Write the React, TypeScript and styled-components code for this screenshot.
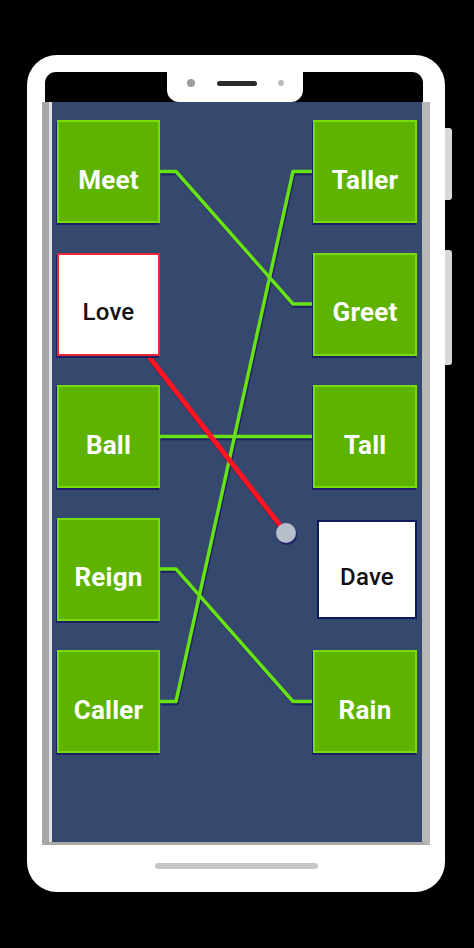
import React from 'react'
import styled, { createGlobalStyle } from 'styled-components'

const GlobalStyle = createGlobalStyle`
  html, body {
    margin: 0;
    padding: 0;
    background: #000;
  }
  body {
    width: 474px;
    height: 948px;
    overflow: hidden;
    font-family: Roboto, "Liberation Sans", sans-serif;
  }
`

const Page = styled.div`
  width: 474px;
  height: 948px;
  background: #000;
  padding: 55px 0 0 27px;
  box-sizing: border-box;
`

const Phone = styled.div`
  position: relative;
  width: 418px;
  height: 837px;
  background: #fff;
  border-radius: 30px;
  padding-top: 17px;
  box-sizing: border-box;
  display: flex;
  flex-direction: column;
`

const SideButton = styled.div<{ $top: number; $height: number }>`
  position: absolute;
  right: -7px;
  top: ${p => p.$top}px;
  width: 7px;
  height: ${p => p.$height}px;
  background: #d9d9d9;
  border-radius: 0 3px 3px 0;
`

const Bezel = styled.div`
  margin-left: 18px;
  width: 378px;
  height: 30px;
  background: #000;
  border-radius: 11px 11px 0 0;
  display: flex;
  justify-content: center;
`

const Notch = styled.div`
  margin-left: 2px;
  width: 136px;
  height: 30px;
  background: #fff;
  border-radius: 0 0 12px 12px;
  display: flex;
  align-items: center;
  justify-content: center;
  padding-bottom: 8px;
  box-sizing: border-box;
`

const Dot = styled.span<{ $size: number; $color: string }>`
  width: ${p => p.$size}px;
  height: ${p => p.$size}px;
  border-radius: 50%;
  background: ${p => p.$color};
`

const Speaker = styled.span`
  width: 40px;
  height: 5px;
  border-radius: 3px;
  background: #2b2b2b;
  margin: 0 21px 0 22px;
`

const ScreenFrame = styled.div`
  margin-left: 15px;
  width: 388px;
  border-left: 7px solid #a8a8a8;
  border-right: 8px solid #b8b8b8;
  border-bottom: 3px solid #a8a8a8;
  box-sizing: border-box;
  padding-left: 3px;
  background: #e4e4e4;
`

const Screen = styled.div`
  position: relative;
  width: 370px;
  height: 740px;
  background: #35486d;
  padding: 18px 5px 0 5px;
  box-sizing: border-box;
  display: flex;
  justify-content: space-between;
`

const Lines = styled.svg`
  position: absolute;
  left: 0;
  top: 0;
  width: 370px;
  height: 740px;
  filter: drop-shadow(1px 2px 0 #1d2062);
`

const Column = styled.div<{ $width: number }>`
  position: relative;
  z-index: 1;
  width: ${p => p.$width}px;
  display: flex;
  flex-direction: column;
  gap: 29.5px;
`

type Kind = 'green' | 'picked' | 'target'

const Card = styled.div<{ $kind: Kind }>`
  height: ${p => (p.$kind === 'target' ? 99 : 103)}px;
  margin: ${p => (p.$kind === 'target' ? '2px 0 2px 4px' : '0')};
  box-sizing: border-box;
  display: flex;
  align-items: center;
  justify-content: center;
  padding-top: 16px;
  font-size: ${p => (p.$kind === 'green' ? 26 : 24)}px;
  font-weight: ${p => (p.$kind === 'green' ? 700 : 500)};
  letter-spacing: 0.2px;
  color: ${p => (p.$kind === 'green' ? '#fff' : '#111')};
  background: ${p => (p.$kind === 'green' ? '#5db300' : '#fff')};
  border: 2px solid
    ${p => (p.$kind === 'green' ? '#78dc0c' : p.$kind === 'picked' ? '#f0243a' : '#0e1a5c')};
  box-shadow: ${p => (p.$kind === 'target' ? 'none' : '-1px 2px 0 #1d2062')};
`

const HomeBar = styled.div`
  margin: 18px auto 0;
  width: 163px;
  height: 6px;
  border-radius: 3px;
  background: #c6c6c6;
`

const left: { word: string; kind: Kind }[] = [
  { word: 'Meet', kind: 'green' },
  { word: 'Love', kind: 'picked' },
  { word: 'Ball', kind: 'green' },
  { word: 'Reign', kind: 'green' },
  { word: 'Caller', kind: 'green' },
]

const right: { word: string; kind: Kind }[] = [
  { word: 'Taller', kind: 'green' },
  { word: 'Greet', kind: 'green' },
  { word: 'Tall', kind: 'green' },
  { word: 'Dave', kind: 'target' },
  { word: 'Rain', kind: 'green' },
]

// left row -> right row
const pairs: [number, number][] = [
  [0, 1],
  [4, 0],
  [2, 2],
  [3, 4],
]

const rowY = (i: number) => 69.5 + i * 132.5

function connector(a: number, b: number) {
  const y1 = rowY(a)
  const y2 = rowY(b)
  if (y1 === y2) return `M108 ${y1} L261 ${y2}`
  return `M108 ${y1} L124 ${y1} L241 ${y2} L261 ${y2}`
}

export default function App() {
  return (
    <>
      <GlobalStyle />
      <Page>
        <Phone>
          <SideButton $top={73} $height={72} />
          <SideButton $top={195} $height={115} />
          <Bezel>
            <Notch>
              <Dot $size={8} $color="#9d9d9d" />
              <Speaker />
              <Dot $size={6} $color="#bdbdbd" />
            </Notch>
          </Bezel>
          <ScreenFrame>
            <Screen>
              <Lines viewBox="0 0 370 740">
                {pairs.map(([a, b]) => (
                  <path
                    key={`${a}-${b}`}
                    d={connector(a, b)}
                    fill="none"
                    stroke="#68e213"
                    strokeWidth={3.5}
                    strokeLinejoin="round"
                  />
                ))}
                <line x1={56} y1={202} x2={234} y2={431} stroke="#ff1522" strokeWidth={5} />
                <circle cx={234} cy={431} r={10} fill="#b6bdcb" />
              </Lines>
              <Column $width={103}>
                {left.map(c => (
                  <Card key={c.word} $kind={c.kind}>
                    {c.word}
                  </Card>
                ))}
              </Column>
              <Column $width={104}>
                {right.map(c => (
                  <Card key={c.word} $kind={c.kind}>
                    {c.word}
                  </Card>
                ))}
              </Column>
            </Screen>
          </ScreenFrame>
          <HomeBar />
        </Phone>
      </Page>
    </>
  )
}
